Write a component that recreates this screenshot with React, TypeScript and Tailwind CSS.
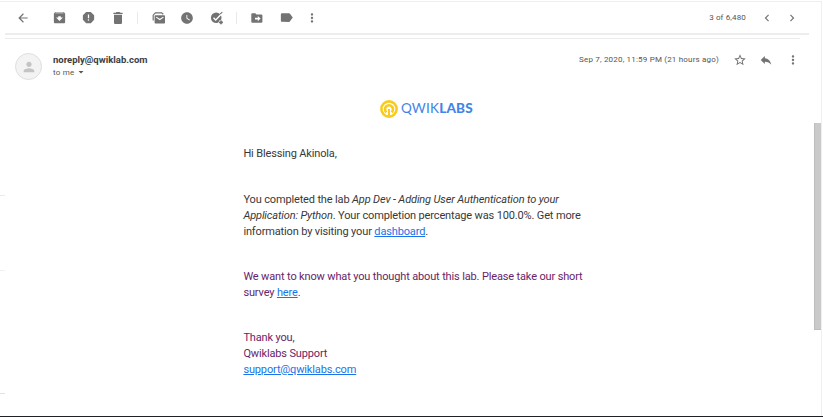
import type { ReactNode } from "react";
import { MdArrowBack, MdArchive, MdReport, MdDelete, MdWatchLater, MdLabel, MdMoreVert, MdChevronLeft, MdChevronRight, MdStarBorder, MdReply, MdPerson, MdArrowDropDown } from "react-icons/md";

function Slot({ children, className = "" }: { children: ReactNode; className?: string }) {
  return <button className={`flex h-4 w-4 shrink-0 items-center justify-center ${className}`}>{children}</button>;
}

function MailStackIcon() {
  return (
    <svg viewBox="0 0 14 14" className="size-3.5" fill="none">
      <path d="M1.2 9.5V4.2L3.4 1.8h6.2l1.7 1.5" stroke="currentColor" strokeWidth="1.2" />
      <rect x="2.6" y="4.2" width="10.4" height="8.3" rx="0.8" fill="currentColor" />
      <path d="M4.2 6.1 7.8 8.5l3.6-2.4" stroke="#fff" strokeWidth="1.1" />
    </svg>
  );
}

function AddTaskIcon() {
  return (
    <svg viewBox="0 0 14 14" className="size-3.5" fill="none">
      <circle cx="6.2" cy="6.8" r="5.3" fill="currentColor" />
      <path d="m3.5 6.7 2.2 2.2 6.2-6.3" stroke="#fff" strokeWidth="1.4" />
      <path d="m10.1 3.2 2.2-2" stroke="currentColor" strokeWidth="1.1" />
      <circle cx="11" cy="11.4" r="2.4" fill="#fff" />
      <path d="M11 9.5v3.8M9.1 11.4h3.8" stroke="currentColor" strokeWidth="1.7" />
    </svg>
  );
}

function MoveIcon() {
  return (
    <svg viewBox="0 0 14 14" className="size-3.5">
      <path d="M1.3 3.3q0-1 1-1h3l1.2 1.2h4.9q1 0 1 1v6.3q0 1-1 1H2.3q-1 0-1-1z" fill="currentColor" />
      <path d="M5 6.7h2.8V4.9l2.8 2.7-2.8 2.7V8.5H5z" fill="#fff" />
    </svg>
  );
}

function Divider({ className }: { className: string }) {
  return <div className={`h-3 w-px bg-[#e9e9e9] ${className}`} />;
}

function Toolbar() {
  return (
    <div className="ml-[5px] flex h-[33px] w-[804px] items-center border-b-2 border-[#ededed] pl-[10px] text-[#737373]">
      <Slot><MdArrowBack size={14} /></Slot>
      <Slot className="ml-5"><MdArchive size={15} /></Slot>
      <Slot className="ml-[13px]"><MdReport size={15} /></Slot>
      <Slot className="ml-[14px]"><MdDelete size={16} /></Slot>
      <Divider className="ml-[11px]" />
      <Slot className="ml-[13px]"><MailStackIcon /></Slot>
      <Slot className="ml-[12px]"><MdWatchLater size={14} /></Slot>
      <Slot className="ml-[14px]"><AddTaskIcon /></Slot>
      <Divider className="ml-[11px]" />
      <Slot className="ml-[12px]"><MoveIcon /></Slot>
      <Slot className="ml-[13px]"><MdLabel size={15} /></Slot>
      <Slot className="ml-[10px]"><MdMoreVert size={14} /></Slot>
      <span className="ml-auto whitespace-nowrap text-[8px] tracking-[0.15px] text-[#555]">3 of 6,480</span>
      <Slot className="ml-[13px]"><MdChevronLeft size={14} /></Slot>
      <Slot className="ml-[9px] mr-[9px]"><MdChevronRight size={14} /></Slot>
    </div>
  );
}

function MessageHeader() {
  return (
    <div className="flex h-[53px] items-start pl-[15px] pt-[13px]">
      <div className="flex size-[27px] items-center justify-center rounded-full border border-[#dedede] bg-[#f3f3f3] text-[#c4c4c4]">
        <MdPerson size={16} />
      </div>
      <div className="ml-[11px] whitespace-nowrap">
        <div className="mt-[1px] text-[9.5px] font-bold leading-3 text-[#3c4043]">noreply@qwiklab.com</div>
        <div className="mt-px flex h-3 items-center text-[8px] tracking-[0.2px] text-[#555]">
          to me
          <MdArrowDropDown size={12} className="ml-[1px] -translate-y-px" />
        </div>
      </div>
      <div className="ml-auto mr-5 flex h-[14px] items-center text-[#737373]">
        <span className="whitespace-nowrap text-[8px] tracking-[0.19px] text-[#555]">Sep 7, 2020, 11:59 PM (21 hours ago)</span>
        <Slot className="ml-[13px]"><MdStarBorder size={14} /></Slot>
        <Slot className="ml-[10px]"><MdReply size={14} /></Slot>
        <Slot className="ml-[11px]"><MdMoreVert size={14} /></Slot>
      </div>
    </div>
  );
}

function Logo() {
  return (
    <div className="flex h-[18px] items-center">
      <svg viewBox="0 0 18 18" className="size-[18px]" fill="none">
        <circle cx="9" cy="9" r="7.6" stroke="#f8cb1c" strokeWidth="2.6" />
        <path d="M6.4 12.3A4 4 0 1 1 11.6 12.3" stroke="#f8cb1c" strokeWidth="2.6" />
        <path d="M9 9v7.5" stroke="#f8cb1c" strokeWidth="2" />
      </svg>
      <span className="ml-[3px] -translate-y-px whitespace-nowrap font-[Lato] text-[13.5px] leading-[18px] tracking-[0.2px] text-[#4285e8]">
        QWIK<b className="font-black">LABS</b>
      </span>
    </div>
  );
}

const link = "text-[#1a73e8] underline";

function MailBody() {
  return (
    <div className="ml-[243px] w-[370px] whitespace-nowrap pl-[0.4px] text-[11px] leading-4 tracking-[-0.145px] text-[#383838]">
      <div className="pl-[136.6px] pt-[7px] tracking-normal"><Logo /></div>
      <p className="mt-7">Hi Blessing Akinola,</p>
      <p className="mt-[30px]">
        You completed the lab <i>App Dev - Adding User Authentication to your<br />Application: Python</i>. Your completion percentage was 100.0%. Get more<br />
        information by visiting your <a className={link}>dashboard</a>.
      </p>
      <p className="mt-[29px] text-[#682468]">
        We want to know what you thought about this lab. Please take our short<br />
        survey <a className={link}>here</a>.
      </p>
      <p className="mt-[29px] text-[#682468]">
        Thank you,<br />Qwiklabs Support<br />
        <a className={link}>support@qwiklabs.com</a>
      </p>
    </div>
  );
}

export default function App() {
  return (
    <div className="relative flex h-[417px] w-[823px] flex-col overflow-hidden border-b border-[#202124] bg-white font-[Roboto,sans-serif]">
      <div className="mt-px h-px w-[822px] shrink-0 bg-[#efefef]" />
      <div className="flex min-h-0 flex-1">
        <main className="w-[821px] shrink-0">
          <Toolbar />
          <div className="mb-px ml-[5px] mt-[3px] h-px w-[795px] bg-[#ececec]" />
          <MessageHeader />
          <MailBody />
        </main>
        <div className="w-px bg-[#efefef]" />
      </div>
      <div className="absolute left-[814px] top-[123px] h-[207px] w-[7px] border-b border-l border-[#bdbdbd] bg-[#cacaca]" />
      <div className="absolute left-0 top-[195px] h-px w-[5px] bg-[#ebebeb]" />
      <div className="absolute left-0 top-[270px] h-px w-[5px] bg-[#f0f0f0]" />
      <div className="absolute left-0 top-[393px] h-px w-[5px] bg-[#e2e2e2]" />
    </div>
  );
}
